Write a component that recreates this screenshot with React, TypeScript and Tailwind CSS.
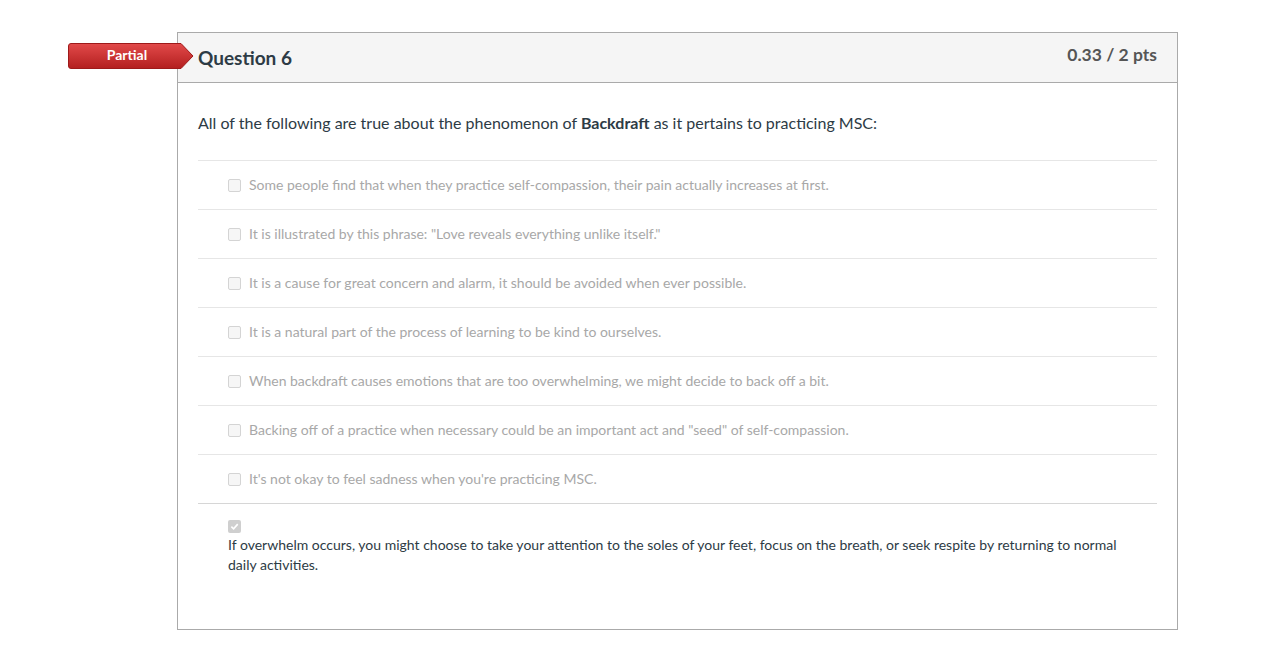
import React from "react";

const answers = [
  "Some people find that when they practice self-compassion, their pain actually increases at first.",
  'It is illustrated by this phrase: "Love reveals everything unlike itself."',
  "It is a cause for great concern and alarm, it should be avoided when ever possible.",
  "It is a natural part of the process of learning to be kind to ourselves.",
  "When backdraft causes emotions that are too overwhelming, we might decide to back off a bit.",
  'Backing off of a practice when necessary could be an important act and "seed" of self-compassion.',
  "It's not okay to feel sadness when you're practicing MSC.",
];

function Badge() {
  return (
    <div className="absolute left-[-110px] top-[10px] w-[126px] h-[26px]">
      <svg width="126" height="26" viewBox="0 0 126 26" className="absolute inset-0">
        <defs>
          <linearGradient id="bg" x1="0" y1="0" x2="0" y2="1">
            <stop offset="0" stopColor="#e24a4a" />
            <stop offset="1" stopColor="#b31f1f" />
          </linearGradient>
        </defs>
        <path d="M3 0.5 H113 L125 13 L113 25.5 H3 Q0.5 25.5 0.5 23 V3 Q0.5 0.5 3 0.5 Z" fill="url(#bg)" stroke="#9e1a1a" strokeWidth="1" />
      </svg>
      <div className="relative w-[118px] text-center text-white font-bold text-[14px] leading-[23px]">
        Partial
      </div>
    </div>
  );
}

function Box() {
  return (
    <span className="flex w-[13px] h-[13px] shrink-0 rounded-[2px] border border-[#d4d4d4] bg-[#f6f6f6]" />
  );
}

export default function App() {
  return (
    <div
      className="min-h-screen bg-white pt-[32px] pl-[177px]"
      style={{ fontFamily: "Lato, 'Noto Sans', sans-serif" }}
    >
      <div className="relative w-[1001px] border border-[#aaaaaa] bg-white">
        <Badge />
        <div className="flex justify-between h-[50px] bg-[#f5f5f5] border-b border-[#aaaaaa] pl-[20px] pr-[20px]">
          <h2 className="text-[19px] font-bold text-[#2d3b45] leading-[24px] mt-[13px]">Question 6</h2>
          <div className="text-[17.5px] font-bold text-[#555555] leading-[20px] mt-[12px]">0.33 / 2 pts</div>
        </div>
        <div className="px-[20px] pt-[28px] pb-[54px]">
          <p className="text-[16px] text-[#2d3b45] leading-[24px] mb-[25px]">
            All of the following are true about the phenomenon of <b>Backdraft</b> as it pertains to practicing MSC:
          </p>
          {answers.map((a) => (
            <div key={a} className="flex items-center h-[49px] border-t border-[#e6e6e6] pl-[30px] gap-[8px]">
              <Box />
              <span className="text-[14px] leading-[20px] text-[#a8a8a8]">{a}</span>
            </div>
          ))}
          <div className="border-t border-[#d6d6d6] pl-[30px] pt-[16px]">
            <span className="flex w-[13px] h-[13px] items-center justify-center rounded-[2px] bg-[#cfcfcf]">
              <svg width="9" height="9" viewBox="0 0 10 10">
                <path d="M1.5 5.2 L4 7.6 L8.6 2.4" fill="none" stroke="#ffffff" strokeWidth="1.8" />
              </svg>
            </span>
            <p className="text-[14px] text-[#2d3b45] leading-[20px] mt-[2px] pr-[30px]">
              If overwhelm occurs, you might choose to take your attention to the soles of your feet, focus on the breath, or seek respite by returning to normal daily activities.
            </p>
          </div>
        </div>
      </div>
    </div>
  );
}
